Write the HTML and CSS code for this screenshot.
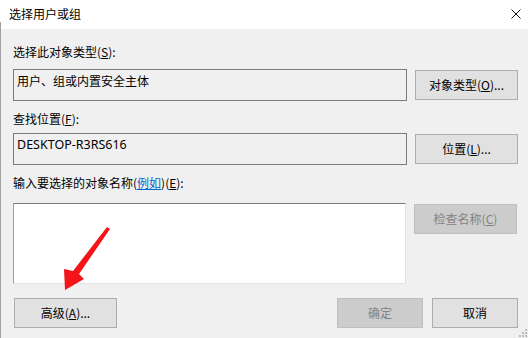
FILE: index.html
```html
<!DOCTYPE html>
<html lang="zh-CN">
<head>
<meta charset="utf-8">
<title>选择用户或组</title>
<link rel="stylesheet" href="styles.css">
</head>
<body>
<div class="window">
  <div class="titlebar">
    <span class="title">选择用户或组</span>
    <svg class="close" width="10" height="10" viewBox="0 0 10 10"><path d="M0.5 0.5L9.5 9.5M9.5 0.5L0.5 9.5" stroke="#111" stroke-width="1"/></svg>
  </div>
  <div class="content">
    <div class="label l1">选择此对象类型(<u>S</u>):</div>
    <div class="row r1">
      <div class="field">用户、组或内置安全主体</div>
      <button class="btn">对象类型(<u>O</u>)...</button>
    </div>
    <div class="label l2">查找位置(<u>F</u>):</div>
    <div class="row r2">
      <div class="field latin">DESKTOP-R3RS616</div>
      <button class="btn">位置(<u>L</u>)...</button>
    </div>
    <div class="label l3">输入要选择的对象名称(<a class="link" href="#">例如</a>)(<u>E</u>):</div>
    <div class="row r3">
      <div class="entry"></div>
      <button class="btn disabled">检查名称(<u>C</u>)</button>
    </div>
    <div class="bottom">
      <button class="btn">高级(<u>A</u>)...</button>
      <div class="actions">
        <button class="btn small disabled">确定</button>
        <button class="btn small">取消</button>
      </div>
    </div>
  </div>
  <svg class="arrow" width="528" height="338" viewBox="0 0 528 338">
    <polygon points="107,227 110,229 79,274 84,279 65,290 64,269 73,271" fill="#f4141a"/>
  </svg>
  <svg class="grip" width="10" height="10" viewBox="0 0 10 10">
    <rect x="7" y="1" width="2" height="2" fill="#bcbcbc"/>
    <rect x="4" y="4" width="2" height="2" fill="#bcbcbc"/>
    <rect x="7" y="4" width="2" height="2" fill="#bcbcbc"/>
    <rect x="1" y="7" width="2" height="2" fill="#bcbcbc"/>
    <rect x="4" y="7" width="2" height="2" fill="#bcbcbc"/>
    <rect x="7" y="7" width="2" height="2" fill="#bcbcbc"/>
  </svg>
</div>
</body>
</html>
```

FILE: styles.css
```css
* { box-sizing: border-box; }
html, body { margin: 0; padding: 0; }
body {
  width: 528px;
  height: 338px;
  overflow: hidden;
  font-family: "Noto Sans", "Noto Sans CJK SC", sans-serif;
  font-size: 12px;
  color: #000;
  background: #f0f0f0;
}
.window {
  position: relative;
  width: 528px;
  height: 338px;
  display: flex;
  flex-direction: column;
}
.titlebar {
  height: 29px;
  background: #fff linear-gradient(#a0a0a0, #a0a0a0) no-repeat left bottom / 1px 7px;
  display: flex;
  align-items: center;
  justify-content: space-between;
  padding: 0 7px 0 9px;
}
.title {
  font-family: "Noto Sans CJK SC", sans-serif;
  font-size: 12px;
  line-height: 16px;
  margin-top: -1px;
}
.close { display: block; margin-top: -1px; }
.content {
  flex: 1;
  background: #f0f0f0;
  border-left: 1px solid #a0a0a0;
  padding: 15px 10px 0 12px;
  display: flex;
  flex-direction: column;
}
.label {
  font-family: "Noto Sans CJK SC", sans-serif;
  line-height: 16px;
  height: 16px;
}
.label u, .btn u { text-decoration: underline; text-underline-offset: 1px; }
.l1 { margin-bottom: 9px; }
.l2 { margin-top: 10px; margin-bottom: 6px; }
.l3 { margin-top: 10px; margin-bottom: 12px; }
.link { color: #0066cc; text-decoration: underline; }
.row {
  display: flex;
  gap: 8px;
  align-items: flex-start;
}
.field {
  width: 394px;
  height: 32px;
  border: 1px solid #7a7a7a;
  background: #f0f0f0;
  padding: 3px 0 0 3px;
  line-height: 16px;
  font-family: "Noto Sans CJK SC", sans-serif;
}
.field.latin {
  font-family: "Noto Sans", "Noto Sans CJK SC", sans-serif;
  padding-top: 3px;
  font-size: 12.5px;
}
.entry {
  width: 393px;
  height: 81px;
  background: #fff;
  border: 1px solid;
  border-color: #7a7a7a #e3e3e3 #e3e3e3 #a0a0a0;
}
.btn {
  width: 103px;
  height: 30px;
  margin-top: 1px;
  background: #e1e1e1;
  border: 1px solid #adadad;
  font-family: "Noto Sans CJK SC", sans-serif;
  font-size: 12px;
  color: #000;
  padding: 0;
  line-height: 16px;
}
.btn.disabled {
  background: #cccccc;
  border-color: #bfbfbf;
  color: #838383;
}
.bottom {
  margin-top: 13px;
  display: flex;
  justify-content: space-between;
  padding-left: 1px;
}
.actions { display: flex; gap: 9px; }
.btn.small { width: 86px; }
.arrow {
  position: absolute;
  left: 0;
  top: 0;
  pointer-events: none;
}
.grip {
  position: absolute;
  right: 0;
  bottom: 0;
}
```
